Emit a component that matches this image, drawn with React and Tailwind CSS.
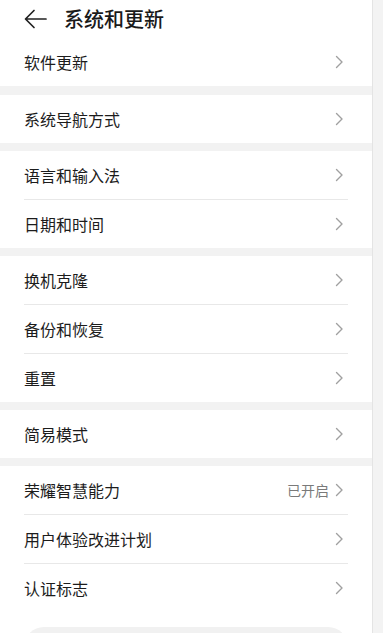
import React from "react";

const Chevron = () => (
  <svg width="9" height="14" viewBox="0 0 9 14" fill="none" className="shrink-0">
    <path d="M1.5 1.5 L7 7 L1.5 12.5" stroke="#a0a0a0" strokeWidth="1.4" strokeLinecap="round" strokeLinejoin="round" />
  </svg>
);

const Row = ({ label, value, divider }) => (
  <div className="flex shrink-0 flex-col">
    <div className="flex h-[48px] shrink-0 items-center pl-6 pr-[28px]">
      <span className="flex-1 text-[16px] text-[#1c1c1c] leading-none">{label}</span>
      {value && <span className="mr-[6px] text-[14px] text-[#7a7a7a] leading-none">{value}</span>}
      <Chevron />
    </div>
    {divider && <div className="mx-6 h-px shrink-0 bg-[#e8e8e8]" />}
  </div>
);

const Band = ({ h = "h-[9px]" }) => <div className={`${h} shrink-0 bg-[#f2f2f2]`} />;

export default function App() {
  return (
    <div
      className="flex h-[633px] w-[383px] overflow-hidden bg-white"
      style={{ fontFamily: '"Noto Sans CJK SC", "Noto Sans", sans-serif' }}
    >
      <div className="flex w-[372px] shrink-0 flex-col">
        <div className="flex h-[38px] shrink-0 items-center pl-6">
          <svg width="23" height="20" viewBox="0 0 23 20" fill="none">
            <path d="M22 10 H2 M10 1.5 L1.5 10 L10 18.5" stroke="#222" strokeWidth="1.7" strokeLinecap="round" strokeLinejoin="round" />
          </svg>
          <span className="ml-[17px] text-[20px] font-medium text-[#1a1a1a] leading-none">系统和更新</span>
        </div>
        <Row label="软件更新" />
        <Band />
        <Row label="系统导航方式" />
        <Band h="h-[8px]" />
        <Row label="语言和输入法" divider />
        <Row label="日期和时间" />
        <Band h="h-[8px]" />
        <Row label="换机克隆" divider />
        <Row label="备份和恢复" divider />
        <Row label="重置" />
        <Band h="h-[8px]" />
        <Row label="简易模式" />
        <Band h="h-[8px]" />
        <Row label="荣耀智慧能力" value="已开启" divider />
        <Row label="用户体验改进计划" divider />
        <Row label="认证标志" />
        <div className="mx-6 mt-[15px] h-[40px] shrink-0 rounded-[20px] bg-[#f1f1f1]" />
      </div>
      <div className="w-[11px] shrink-0 border-l border-[#e4e4e4] bg-[#f3f3f3]" />
    </div>
  );
}
